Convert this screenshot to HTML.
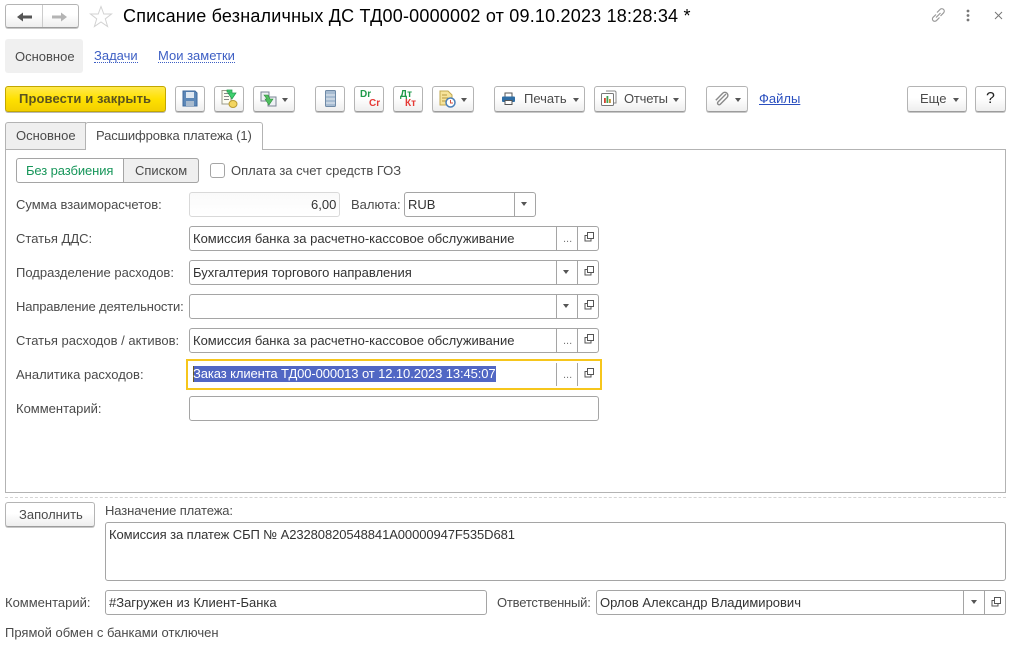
<!DOCTYPE html>
<html lang="ru"><head><meta charset="utf-8"><title>Списание</title>
<style>
html,body{margin:0;padding:0;background:#fff}
#p{position:relative;width:1014px;height:647px;overflow:hidden;background:#fff;font:13px/16px "Liberation Sans",Arial,sans-serif;color:#4b4b4b}
#p div,#p span.t,#p svg{position:absolute}
.t{white-space:nowrap;position:absolute}
.btn{box-sizing:border-box;border:1px solid #b4b4b4;border-bottom-color:#9c9c9c;border-radius:3px;background:linear-gradient(#fff 0%,#fff 45%,#eeeeee 100%);box-shadow:0 1px 0 #c8c8c8}
.f{box-sizing:border-box;border:1px solid #a5a5a5;border-radius:3px;background:#fff}
.sep{width:1px;background:#a5a5a5}
.v{color:#333}
.a{left:0;top:0;width:0;height:0;border-left:3.5px solid transparent;border-right:3.5px solid transparent;border-top:4px solid #555}
.d{color:#777;font-size:11px}
</style></head><body><div id="p">

<!-- nav -->
<div class="btn" style="left:5px;top:4px;width:74px;height:24px"></div>
<div style="left:42px;top:5px;width:1px;height:22px;background:#ccc"></div>
<svg style="left:17px;top:10px" width="16" height="14"><path d="M0 7L6 2.500V5.500H15V8.500H6V11.500Z" fill="#555"/></svg>
<svg style="left:52px;top:10px" width="16" height="14"><path d="M15 7L9 2.500V5.500H0V8.500H9V11.500Z" fill="#b4b4b4"/></svg>
<svg style="left:89px;top:5px" width="24" height="23"><path d="M12 1.500L14.800 9H22.500L16.300 13.800L18.600 21.500L12 17L5.400 21.500L7.700 13.800L1.500 9H9.200Z" fill="#fff" stroke="#d2d2d2" stroke-width="1"/></svg>
<span class="t" style="left:123px;top:6px;font-size:18px;line-height:20px;color:#000;letter-spacing:.2px">Списание безналичных ДС ТД00-0000002 от 09.10.2023 18:28:34 *</span>

<svg style="left:930px;top:7px" width="17" height="17" fill="none" stroke="#9a9a9a" stroke-width="1.200"><path d="M7 5.500L10 2.500a2.300 2.300 0 0 1 3.600 3.300L10.500 9"/><path d="M9.500 10.500L6.500 13.600a2.300 2.300 0 0 1-3.400-3.300L6 7.500"/><path d="M6 10.500L10.500 6"/></svg>
<svg style="left:965px;top:9px" width="6" height="14" fill="#777"><circle cx="3" cy="2" r="1.400"/><circle cx="3" cy="6.500" r="1.400"/><circle cx="3" cy="11" r="1.400"/></svg>
<svg style="left:993px;top:10px" width="11" height="11" stroke="#777" stroke-width="1"><path d="M2 2L9 9M9 2L2 9"/></svg>

<!-- top tabs -->
<div style="left:5px;top:39px;width:78px;height:34px;background:#f0f0f0;border-radius:3px"></div>
<span class="t" style="left:15px;top:49px">Основное</span>
<span class="t" style="left:94px;top:49px;color:#3d5fc4;border-bottom:1px dotted #3d5fc4;line-height:14px;height:13px">Задачи</span>
<span class="t" style="left:158px;top:49px;color:#3d5fc4;border-bottom:1px dotted #3d5fc4;line-height:14px;height:13px">Мои заметки</span>

<!-- toolbar -->
<div style="box-sizing:border-box;left:5px;top:86px;width:161px;height:26px;border:1px solid #c2a700;border-radius:3px;background:linear-gradient(#ffe94d,#ffe100 50%,#f3cf00);box-shadow:0 1px 0 #b9b9b9"></div>
<span class="t" style="left:19px;top:91px;font-size:13px;font-weight:bold;color:#5b5320;letter-spacing:.1px">Провести и закрыть</span>

<div class="btn" style="left:175px;top:86px;width:30px;height:26px"></div>
<svg style="left:182px;top:90px" width="16" height="17"><path d="M1 1H13L15 3V16H1Z" fill="#5d88b8" stroke="#3f6a9e"/><rect x="4" y="2" width="8" height="6" fill="#dfe8f2"/><rect x="4" y="11" width="8" height="5" fill="#a9bbce"/></svg>
<div class="btn" style="left:214px;top:86px;width:30px;height:26px"></div>
<svg style="left:221px;top:89px" width="18" height="20"><path d="M1 1.500H10V15H1Z" fill="#fdfdf2" stroke="#9c9c8a"/><path d="M3 4.500H8M3 7.500H8M3 10.500H8" stroke="#888"/><path d="M6 1H11V4H15L11 10L7 4H9V3H6Z" fill="#3fd070" stroke="#1f9a4a" stroke-width=".7"/><ellipse cx="12" cy="15" rx="4" ry="3.500" fill="#f3d560" stroke="#b89a30"/></svg>
<div class="btn" style="left:253px;top:86px;width:42px;height:26px"></div>
<svg style="left:260px;top:91px" width="18" height="17"><path d="M1 1H9V10H1Z" fill="#eef1f5" stroke="#7a8494"/><path d="M8 6H16V15H8Z" fill="#eef1f5" stroke="#7a8494"/><path d="M4 4H8L10 8H13L9 14L5 8H7Z" fill="#4fbf60" stroke="#2c8c3a" stroke-width=".6"/></svg>
<div class="a" style="left:282px;top:98px"></div>

<div class="btn" style="left:315px;top:86px;width:30px;height:26px"></div>
<svg style="left:325px;top:90px" width="11" height="18"><rect x=".5" y=".5" width="10" height="16" rx="1" fill="#a7bcd2" stroke="#6f8aa6"/><path d="M1 5H10M1 9H10M1 13H10" stroke="#e8eef4"/></svg>
<div class="btn" style="left:354px;top:86px;width:30px;height:26px"></div>
<span class="t" style="left:360px;top:90px;font-size:10px;line-height:10px;font-weight:bold;color:#1e9a4a">Dr</span>
<span class="t" style="left:369px;top:99px;font-size:10px;line-height:10px;font-weight:bold;color:#e53935">Cr</span>
<div class="btn" style="left:393px;top:86px;width:30px;height:26px"></div>
<span class="t" style="left:400px;top:90px;font-size:10px;line-height:10px;font-weight:bold;color:#1e9a4a">Дт</span>
<span class="t" style="left:405px;top:99px;font-size:10px;line-height:10px;font-weight:bold;color:#e53935">Кт</span>
<div class="btn" style="left:432px;top:86px;width:42px;height:26px"></div>
<svg style="left:439px;top:90px" width="18" height="18"><path d="M1 1H9L13 5V15H1Z" fill="#f6e39a" stroke="#c2a850"/><path d="M3 5H8M3 8H9M3 11H7" stroke="#b89a40"/><circle cx="11.500" cy="12.500" r="4.500" fill="#fff" stroke="#4a7fb8" stroke-width="1.500"/><path d="M11.500 10V13H14" stroke="#d05040" fill="none"/></svg>
<div class="a" style="left:461px;top:98px"></div>

<div class="btn" style="left:494px;top:86px;width:91px;height:26px"></div>
<svg style="left:501px;top:92px" width="15" height="14"><rect x="4" y="1" width="7" height="4" fill="#fff" stroke="#555"/><rect x="1" y="4.500" width="13" height="5.500" rx="1" fill="#2f6ea5"/><rect x="4" y="8.500" width="7" height="4" fill="#fff" stroke="#555"/></svg>
<span class="t" style="left:524px;top:91px">Печать</span>
<div class="a" style="left:573px;top:98px"></div>
<div class="btn" style="left:594px;top:86px;width:92px;height:26px"></div>
<svg style="left:600px;top:90px" width="18" height="17"><path d="M6 1H15L16 2V13H13" fill="#fff" stroke="#888"/><rect x="1.500" y="3.500" width="12" height="12" rx="1" fill="#fff" stroke="#777"/><rect x="4" y="8" width="1.800" height="5" fill="#d04030"/><rect x="6.500" y="6" width="1.800" height="7" fill="#40a050"/><rect x="9" y="9" width="1.800" height="4" fill="#c09030"/></svg>
<span class="t" style="left:624px;top:91px;letter-spacing:-.2px">Отчеты</span>
<div class="a" style="left:673px;top:98px"></div>
<div class="btn" style="left:706px;top:86px;width:42px;height:26px"></div>
<svg style="left:713px;top:91px" width="16" height="16" fill="none" stroke="#8a8a8a" stroke-width="1.400"><path d="M13 3L5 11a1.600 1.600 0 0 0 2.300 2.300L14 6.500a3 3 0 0 0-4.300-4.300L2.800 9.200"/></svg>
<div class="a" style="left:735px;top:98px"></div>
<span class="t" style="left:759px;top:91px;color:#2a4fbf;text-decoration:underline">Файлы</span>

<div class="btn" style="left:907px;top:86px;width:60px;height:26px"></div>
<span class="t" style="left:920px;top:91px">Еще</span>
<div class="a" style="left:953px;top:98px"></div>
<div class="btn" style="left:975px;top:86px;width:31px;height:26px"></div>
<span class="t" style="left:986px;top:91px;font-size:16px;font-weight:normal;color:#222">?</span>

<!-- tabs panel -->
<div style="box-sizing:border-box;left:5px;top:149px;width:1001px;height:344px;border:1px solid #b3b3b3;background:#fff"></div>
<div style="box-sizing:border-box;left:5px;top:122px;width:81px;height:28px;background:#efefef;border:1px solid #b3b3b3;border-radius:3px 0 0 0"></div>
<span class="t" style="left:16px;top:128px">Основное</span>
<div style="box-sizing:border-box;left:85px;top:122px;width:178px;height:28px;background:#fff;border:1px solid #b3b3b3;border-bottom:0;border-radius:3px 3px 0 0"></div>
<span class="t" style="left:96px;top:128px;letter-spacing:-.12px">Расшифровка платежа (1)</span>

<!-- switch -->
<div style="box-sizing:border-box;left:16px;top:158px;width:183px;height:25px;border:1px solid #a5a5a5;border-radius:3px;background:#fff"></div>
<div style="box-sizing:border-box;left:123px;top:158px;width:76px;height:25px;border:1px solid #a5a5a5;border-radius:0 3px 3px 0;background:#efefef"></div>
<span class="t" style="left:26px;top:163px;color:#17965a;letter-spacing:-.1px">Без разбиения</span>
<span class="t" style="left:135px;top:163px">Списком</span>
<div style="box-sizing:border-box;left:210px;top:163px;width:15px;height:15px;border:1px solid #a5a5a5;border-radius:3px;background:#fff"></div>
<span class="t" style="left:231px;top:163px">Оплата за счет средств ГОЗ</span>

<!-- labels -->
<span class="t" style="left:16px;top:197px">Сумма взаиморасчетов:</span>
<span class="t" style="left:16px;top:231px">Статья ДДС:</span>
<span class="t" style="left:16px;top:265px">Подразделение расходов:</span>
<span class="t" style="left:16px;top:299px;letter-spacing:-.15px">Направление деятельности:</span>
<span class="t" style="left:16px;top:333px">Статья расходов / активов:</span>
<span class="t" style="left:16px;top:367px">Аналитика расходов:</span>
<span class="t" style="left:16px;top:401px">Комментарий:</span>

<!-- sum -->
<div style="box-sizing:border-box;left:189px;top:192px;width:151px;height:25px;border:1px solid #d9d9d9;border-radius:3px;background:linear-gradient(#fafafa,#fff)"></div>
<span class="t v" style="left:311px;top:197px">6,00</span>
<span class="t" style="left:351px;top:197px">Валюта:</span>
<div class="f" style="left:404px;top:192px;width:132px;height:25px"></div>
<div class="sep" style="left:514px;top:193px;height:23px"></div>
<span class="t v" style="left:408px;top:197px">RUB</span>
<div class="a" style="left:521px;top:202px"></div>

<!-- fields -->
<div class="f" style="left:189px;top:226px;width:410px;height:25px"></div>
<div class="sep" style="left:556px;top:227px;height:23px"></div><div class="sep" style="left:577px;top:227px;height:23px"></div>
<span class="t v" style="left:193px;top:231px">Комиссия банка за расчетно-кассовое обслуживание</span>
<span class="t d" style="left:563px;top:231px">...</span>

<div class="f" style="left:189px;top:260px;width:410px;height:25px"></div>
<div class="sep" style="left:556px;top:261px;height:23px"></div><div class="sep" style="left:577px;top:261px;height:23px"></div>
<span class="t v" style="left:193px;top:265px">Бухгалтерия торгового направления</span>
<div class="a" style="left:563px;top:270px"></div>

<div class="f" style="left:189px;top:294px;width:410px;height:25px"></div>
<div class="sep" style="left:556px;top:295px;height:23px"></div><div class="sep" style="left:577px;top:295px;height:23px"></div>
<div class="a" style="left:563px;top:304px"></div>

<div class="f" style="left:189px;top:328px;width:410px;height:25px"></div>
<div class="sep" style="left:556px;top:329px;height:23px"></div><div class="sep" style="left:577px;top:329px;height:23px"></div>
<span class="t v" style="left:193px;top:333px">Комиссия банка за расчетно-кассовое обслуживание</span>
<span class="t d" style="left:563px;top:333px">...</span>

<div style="box-sizing:border-box;left:186px;top:359px;width:416px;height:31px;border:2px solid #f6c61c;background:#fff"></div>
<div class="sep" style="left:556px;top:363px;height:23px"></div><div class="sep" style="left:577px;top:363px;height:23px"></div>
<div style="left:193px;top:366px;width:303px;height:16px;background:#5167c4"></div>
<div style="left:193px;top:366px;width:1px;height:16px;background:#6b5a20"></div>
<span class="t" style="left:193px;top:366px;color:#fff;letter-spacing:-.1px">Заказ клиента ТД00-000013 от 12.10.2023 13:45:07</span>
<span class="t d" style="left:563px;top:367px">...</span>

<div class="f" style="left:189px;top:396px;width:410px;height:25px"></div>

<svg style="left:584px;top:232px" width="10" height="10" fill="none" stroke="#555"><path d="M1 3.500H3M1 3V9H7V7"/><rect x="3.500" y=".5" width="6" height="6"/></svg>
<svg style="left:584px;top:266px" width="10" height="10" fill="none" stroke="#555"><path d="M1 3.500H3M1 3V9H7V7"/><rect x="3.500" y=".5" width="6" height="6"/></svg>
<svg style="left:584px;top:300px" width="10" height="10" fill="none" stroke="#555"><path d="M1 3.500H3M1 3V9H7V7"/><rect x="3.500" y=".5" width="6" height="6"/></svg>
<svg style="left:584px;top:334px" width="10" height="10" fill="none" stroke="#555"><path d="M1 3.500H3M1 3V9H7V7"/><rect x="3.500" y=".5" width="6" height="6"/></svg>
<svg style="left:584px;top:368px" width="10" height="10" fill="none" stroke="#555"><path d="M1 3.500H3M1 3V9H7V7"/><rect x="3.500" y=".5" width="6" height="6"/></svg>

<!-- bottom -->
<div style="left:5px;top:497px;width:1001px;height:0;border-top:1px dashed #d5d5d5"></div>
<div class="btn" style="left:5px;top:502px;width:90px;height:25px"></div>
<span class="t" style="left:19px;top:507px">Заполнить</span>
<span class="t" style="left:105px;top:503px;letter-spacing:-.1px">Назначение платежа:</span>
<div class="f" style="left:105px;top:522px;width:901px;height:59px"></div>
<span class="t v" style="left:109px;top:527px;letter-spacing:-.09px">Комиссия за платеж СБП № А23280820548841А00000947F535D681</span>
<span class="t" style="left:5px;top:595px">Комментарий:</span>
<div class="f" style="left:105px;top:590px;width:382px;height:25px"></div>
<span class="t v" style="left:109px;top:595px">#Загружен из Клиент-Банка</span>
<span class="t" style="left:497px;top:595px;letter-spacing:-.2px">Ответственный:</span>
<div class="f" style="left:596px;top:590px;width:410px;height:25px"></div>
<div class="sep" style="left:963px;top:591px;height:23px"></div><div class="sep" style="left:984px;top:591px;height:23px"></div>
<span class="t v" style="left:600px;top:595px">Орлов Александр Владимирович</span>
<div class="a" style="left:971px;top:600px"></div>
<svg style="left:991px;top:597px" width="10" height="10" fill="none" stroke="#555"><path d="M1 3.500H3M1 3V9H7V7"/><rect x="3.500" y=".5" width="6" height="6"/></svg>
<span class="t" style="left:5px;top:625px">Прямой обмен с банками отключен</span>
</div></body></html>
